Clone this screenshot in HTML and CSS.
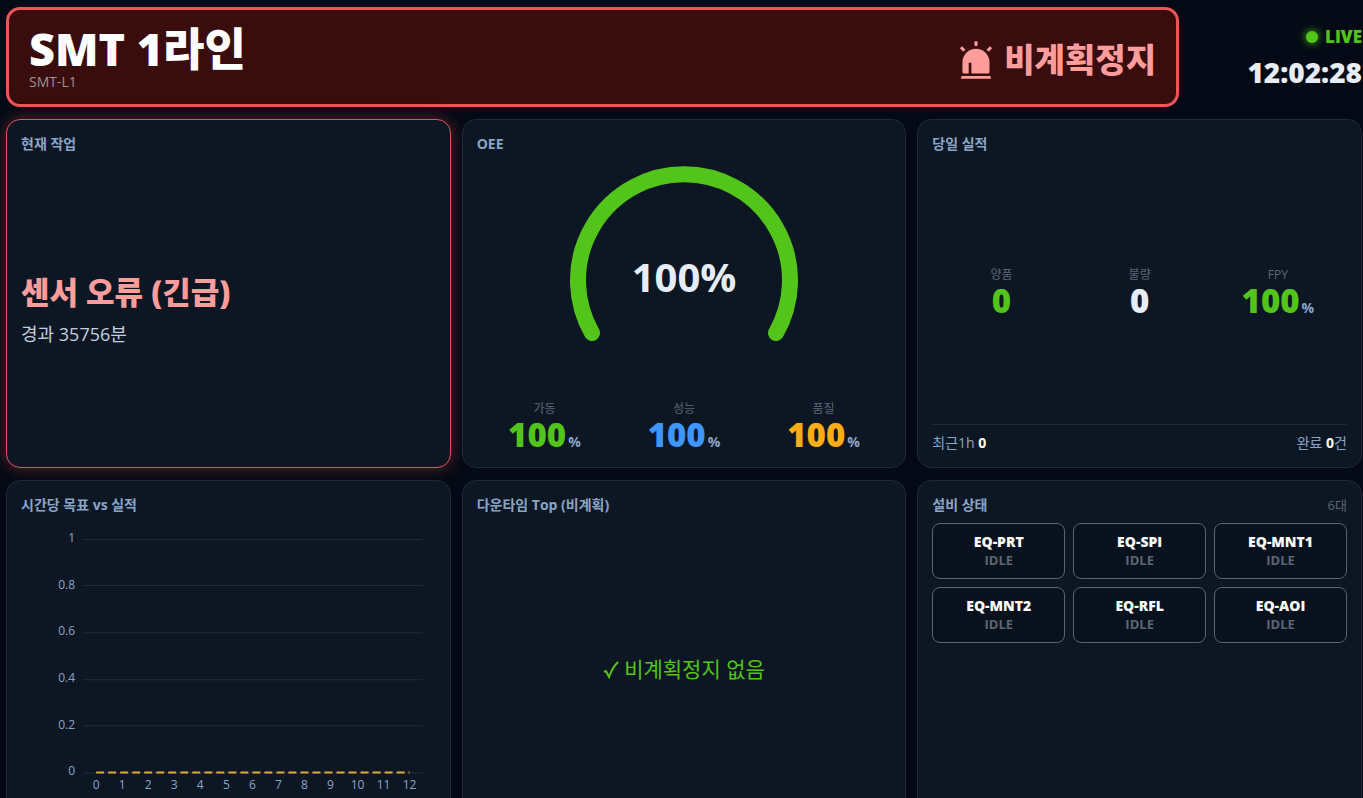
FILE: index.html
```html
<!DOCTYPE html>
<html lang="ko">
<head>
    <meta charset="UTF-8">
    <meta name="viewport" content="width=device-width, initial-scale=1.0">
    <title>SMT 1라인</title>
    <link rel="stylesheet" href="styles.css">
</head>
<body>
    <div class="board">
        <!-- Line status banner + clock -->
        <header class="board-header">
            <div class="banner">
                <div>
                    <h1 class="line-name">SMT 1라인</h1>
                    <div class="line-code">SMT-L1</div>
                </div>
                <div class="line-status">
                    <svg class="alert-icon" viewBox="64 64 896 896" fill="currentColor" fill-rule="evenodd" aria-hidden="true">
                        <path d="M512 244c176.18 0 319 142.82 319 319v233a32 32 0 01-32 32H225a32 32 0 01-32-32V563c0-176.18 142.82-319 319-319zM484 68h56a8 8 0 018 8v96a8 8 0 01-8 8h-56a8 8 0 01-8-8V76a8 8 0 018-8zM177.25 191.66a8 8 0 0111.32 0l67.88 67.88a8 8 0 010 11.31l-39.6 39.6a8 8 0 01-11.31 0l-67.88-67.88a8 8 0 010-11.31l39.6-39.6zm669.6 0l39.6 39.6a8 8 0 010 11.3l-67.88 67.9a8 8 0 01-11.32 0l-39.6-39.6a8 8 0 010-11.32l67.89-67.88a8 8 0 0111.31 0zM192 892h640a32 32 0 0132 32v24a8 8 0 01-8 8H168a8 8 0 01-8-8v-24a32 32 0 0132-32zm148-317v253h64V575h-64z"/>
                    </svg>
                    <span>비계획정지</span>
                </div>
            </div>
            <div class="clock">
                <div class="live"><span class="live-dot"></span>LIVE</div>
                <time class="time">12:02:28</time>
            </div>
        </header>

        <main class="cards">
            <section class="card card-alert">
                <div class="card-head"><h2>현재 작업</h2></div>
                <div class="card-body job">
                    <div class="job-reason">센서 오류 (긴급)</div>
                    <div class="job-elapsed">경과 35756분</div>
                </div>
            </section>

            <section class="card">
                <div class="card-head"><h2>OEE</h2></div>
                <div class="card-body">
                    <svg class="gauge" viewBox="0 0 240 230" role="img" aria-label="OEE 100%">
                        <path d="M28 171A106 106 0 1 1 212 171" fill="none" stroke="#52c41a" stroke-width="16" stroke-linecap="round"/>
                        <text class="gauge-value" x="120" y="130" text-anchor="middle">100%</text>
                    </svg>
                    <div class="kpis kpis-bottom">
                        <div class="kpi">
                            <div class="kpi-label">가동</div>
                            <div class="kpi-value green">100<small>%</small></div>
                        </div>
                        <div class="kpi">
                            <div class="kpi-label">성능</div>
                            <div class="kpi-value blue">100<small>%</small></div>
                        </div>
                        <div class="kpi">
                            <div class="kpi-label">품질</div>
                            <div class="kpi-value orange">100<small>%</small></div>
                        </div>
                    </div>
                </div>
            </section>

            <section class="card">
                <div class="card-head"><h2>당일 실적</h2></div>
                <div class="card-body">
                    <div class="kpis kpis-center">
                        <div class="kpi">
                            <div class="kpi-label">양품</div>
                            <div class="kpi-value green">0</div>
                        </div>
                        <div class="kpi">
                            <div class="kpi-label">불량</div>
                            <div class="kpi-value">0</div>
                        </div>
                        <div class="kpi">
                            <div class="kpi-label">FPY</div>
                            <div class="kpi-value green">100<small>%</small></div>
                        </div>
                    </div>
                    <div class="summary">
                        <span>최근1h <b>0</b></span>
                        <span>완료 <b>0</b>건</span>
                    </div>
                </div>
            </section>

            <section class="card">
                <div class="card-head"><h2>시간당 목표 vs 실적</h2></div>
                <div class="card-body">
                    <svg class="chart" viewBox="0 0 414 290" role="img" aria-label="시간당 목표 vs 실적">
                        <g class="grid-lines">
                            <path d="M62 16.5H401M62 62.5H401M62 109.5H401M62 156.5H401M62 202.5H401M62 249.5H401"/>
                        </g>
                        <g class="axis-text" text-anchor="end">
                            <text x="54" y="19">1</text>
                            <text x="54" y="66">0.8</text>
                            <text x="54" y="112">0.6</text>
                            <text x="54" y="159">0.4</text>
                            <text x="54" y="206">0.2</text>
                            <text x="54" y="252">0</text>
                        </g>
                        <g class="axis-text" text-anchor="middle">
                            <text x="75" y="266">0</text>
                            <text x="101" y="266">1</text>
                            <text x="127" y="266">2</text>
                            <text x="153" y="266">3</text>
                            <text x="179" y="266">4</text>
                            <text x="205" y="266">5</text>
                            <text x="231" y="266">6</text>
                            <text x="257" y="266">7</text>
                            <text x="283" y="266">8</text>
                            <text x="309" y="266">9</text>
                            <text x="336" y="266">10</text>
                            <text x="362" y="266">11</text>
                            <text x="388" y="266">12</text>
                        </g>
                        <path class="target-line" d="M75 249H388"/>
                    </svg>
                </div>
            </section>

            <section class="card">
                <div class="card-head"><h2>다운타임 Top (비계획)</h2></div>
                <div class="card-body empty">
                    <svg class="check-icon" viewBox="0 0 16 20" aria-hidden="true">
                        <path d="M1 13l2-1 3 6C8 12 11 7 15 3" fill="none" stroke="currentColor" stroke-width="2"/>
                    </svg>
                    <span>비계획정지 없음</span>
                </div>
            </section>

            <section class="card">
                <div class="card-head"><h2>설비 상태</h2><span class="count">6대</span></div>
                <div class="card-body">
                    <div class="equipment">
                        <div class="eq"><div class="eq-name">EQ-PRT</div><div class="eq-state">IDLE</div></div>
                        <div class="eq"><div class="eq-name">EQ-SPI</div><div class="eq-state">IDLE</div></div>
                        <div class="eq"><div class="eq-name">EQ-MNT1</div><div class="eq-state">IDLE</div></div>
                        <div class="eq"><div class="eq-name">EQ-MNT2</div><div class="eq-state">IDLE</div></div>
                        <div class="eq"><div class="eq-name">EQ-RFL</div><div class="eq-state">IDLE</div></div>
                        <div class="eq"><div class="eq-name">EQ-AOI</div><div class="eq-state">IDLE</div></div>
                    </div>
                </div>
            </section>
        </main>
    </div>
</body>
</html>
```

FILE: styles.css
```css
* {
    box-sizing: border-box;
}
html {
    overflow: hidden;
}
body {
    margin: 0;
    background-color: #040a15;
    color: #e6edf7;
    font-family: "Open Sans", "Noto Sans CJK KR", sans-serif;
    font-size: 13px;
    line-height: 20px;
}
h1, h2 {
    margin: 0;
}
.board {
    display: flex;
    flex-direction: column;
    gap: 12px;
    padding: 7px 1px 12px 6px;
}

/* Header */
.board-header {
    display: flex;
    gap: 12px;
}
.banner {
    flex: 1;
    display: flex;
    align-items: center;
    justify-content: space-between;
    padding: 14px 20px;
    border: 3px solid #ee5557;
    border-radius: 14px;
    background-color: #390c0d;
}
.line-name {
    font-size: 45px;
    font-weight: 800;
    line-height: 50px;
    color: #fff;
}
.line-code {
    font-size: 14px;
    line-height: 16px;
    color: #9c9297;
}
.line-status {
    display: flex;
    align-items: center;
    gap: 9px;
    padding-top: 6px;
    font-size: 33px;
    font-weight: 800;
    line-height: 40px;
    color: #ff9c9c;
}
.alert-icon {
    width: 38px;
    height: 38px;
}
.clock {
    flex: 0 0 171px;
    display: flex;
    flex-direction: column;
    align-items: flex-end;
    justify-content: center;
    gap: 9px;
}
.live {
    display: flex;
    align-items: center;
    gap: 7px;
    font-size: 17px;
    font-weight: 800;
    color: #52c41a;
}
.live-dot {
    width: 12px;
    height: 12px;
    border-radius: 50%;
    background-color: #52c41a;
    box-shadow: 0 0 8px #52c41a;
}
.time {
    font-size: 28px;
    font-weight: 800;
    line-height: 32px;
}

/* Cards */
.cards {
    display: grid;
    grid-template-columns: repeat(3, minmax(0, 1fr));
    grid-auto-rows: minmax(349px, auto);
    gap: 12px 11px;
}
.card {
    display: flex;
    flex-direction: column;
    padding: 14px;
    border: 1px solid #1c2a3b;
    border-radius: 14px;
    background-color: #0d1724;
}
.card-alert {
    border-color: #e8505b;
    box-shadow: 0 0 16px rgba(255, 77, 79, 0.35);
}
.card-head {
    display: flex;
    justify-content: space-between;
    margin-bottom: 8px;
}
.card-head h2 {
    font-size: 14px;
    font-weight: 700;
    line-height: 20px;
    color: #8aa4c8;
}
.count {
    color: #5c6675;
}
.card-body {
    flex: 1;
    display: flex;
    flex-direction: column;
}
.job {
    justify-content: center;
    gap: 8px;
}
.job-reason {
    font-size: 31px;
    font-weight: 800;
    line-height: 44px;
    color: #ff9c9c;
}
.job-elapsed {
    font-size: 18px;
    line-height: 24px;
    color: #c3cedd;
}

/* KPI numbers */
.gauge {
    width: 240px;
    margin: 0 auto;
}
.gauge-value {
    font-size: 40px;
    font-weight: 700;
    fill: #e6edf7;
}
.kpis {
    display: grid;
    grid-template-columns: repeat(3, 1fr);
    text-align: center;
}
.kpis-bottom {
    gap: 4px;
    margin-top: auto;
}
.kpis-center {
    flex: 1;
    align-content: center;
}
.kpi-label {
    font-size: 12px;
    line-height: 16px;
    color: #5c6675;
}
.kpi-value {
    font-size: 33px;
    font-weight: 800;
    line-height: 36px;
}
.kpi-value small {
    margin-left: 2px;
    font-size: 14px;
    font-weight: 700;
    line-height: 14px;
    color: #8aa4c8;
}
.green {
    color: #52c41a;
}
.blue {
    color: #4096ff;
}
.orange {
    color: #faad14;
}
.summary {
    display: flex;
    justify-content: space-between;
    padding-top: 8px;
    border-top: 1px solid #1c2a3b;
    font-size: 14px;
    color: #8aa4c8;
}
.summary b {
    color: #fff;
}

/* Hourly chart */
.chart {
    width: 100%;
}
.grid-lines {
    stroke: #1e2c3b;
}
.axis-text {
    font-size: 12px;
    fill: #8aa4c8;
}
.target-line {
    stroke: #e0a93f;
    stroke-width: 2;
    stroke-dasharray: 8 4;
}

.empty {
    flex-direction: row;
    align-items: center;
    justify-content: center;
    gap: 5px;
    font-size: 21px;
    color: #52c41a;
}
.check-icon {
    width: 16px;
    height: 20px;
}

/* Equipment tiles */
.equipment {
    display: grid;
    grid-template-columns: repeat(3, 1fr);
    gap: 8px;
}
.eq {
    padding: 9px 8px;
    border: 1px solid #596373;
    border-radius: 8px;
    background-color: #08111e;
    text-align: center;
    line-height: 18px;
}
.eq-name {
    font-size: 14px;
    font-weight: 800;
    color: #fff;
}
.eq-state {
    font-weight: 700;
    color: #5c6675;
}
```
